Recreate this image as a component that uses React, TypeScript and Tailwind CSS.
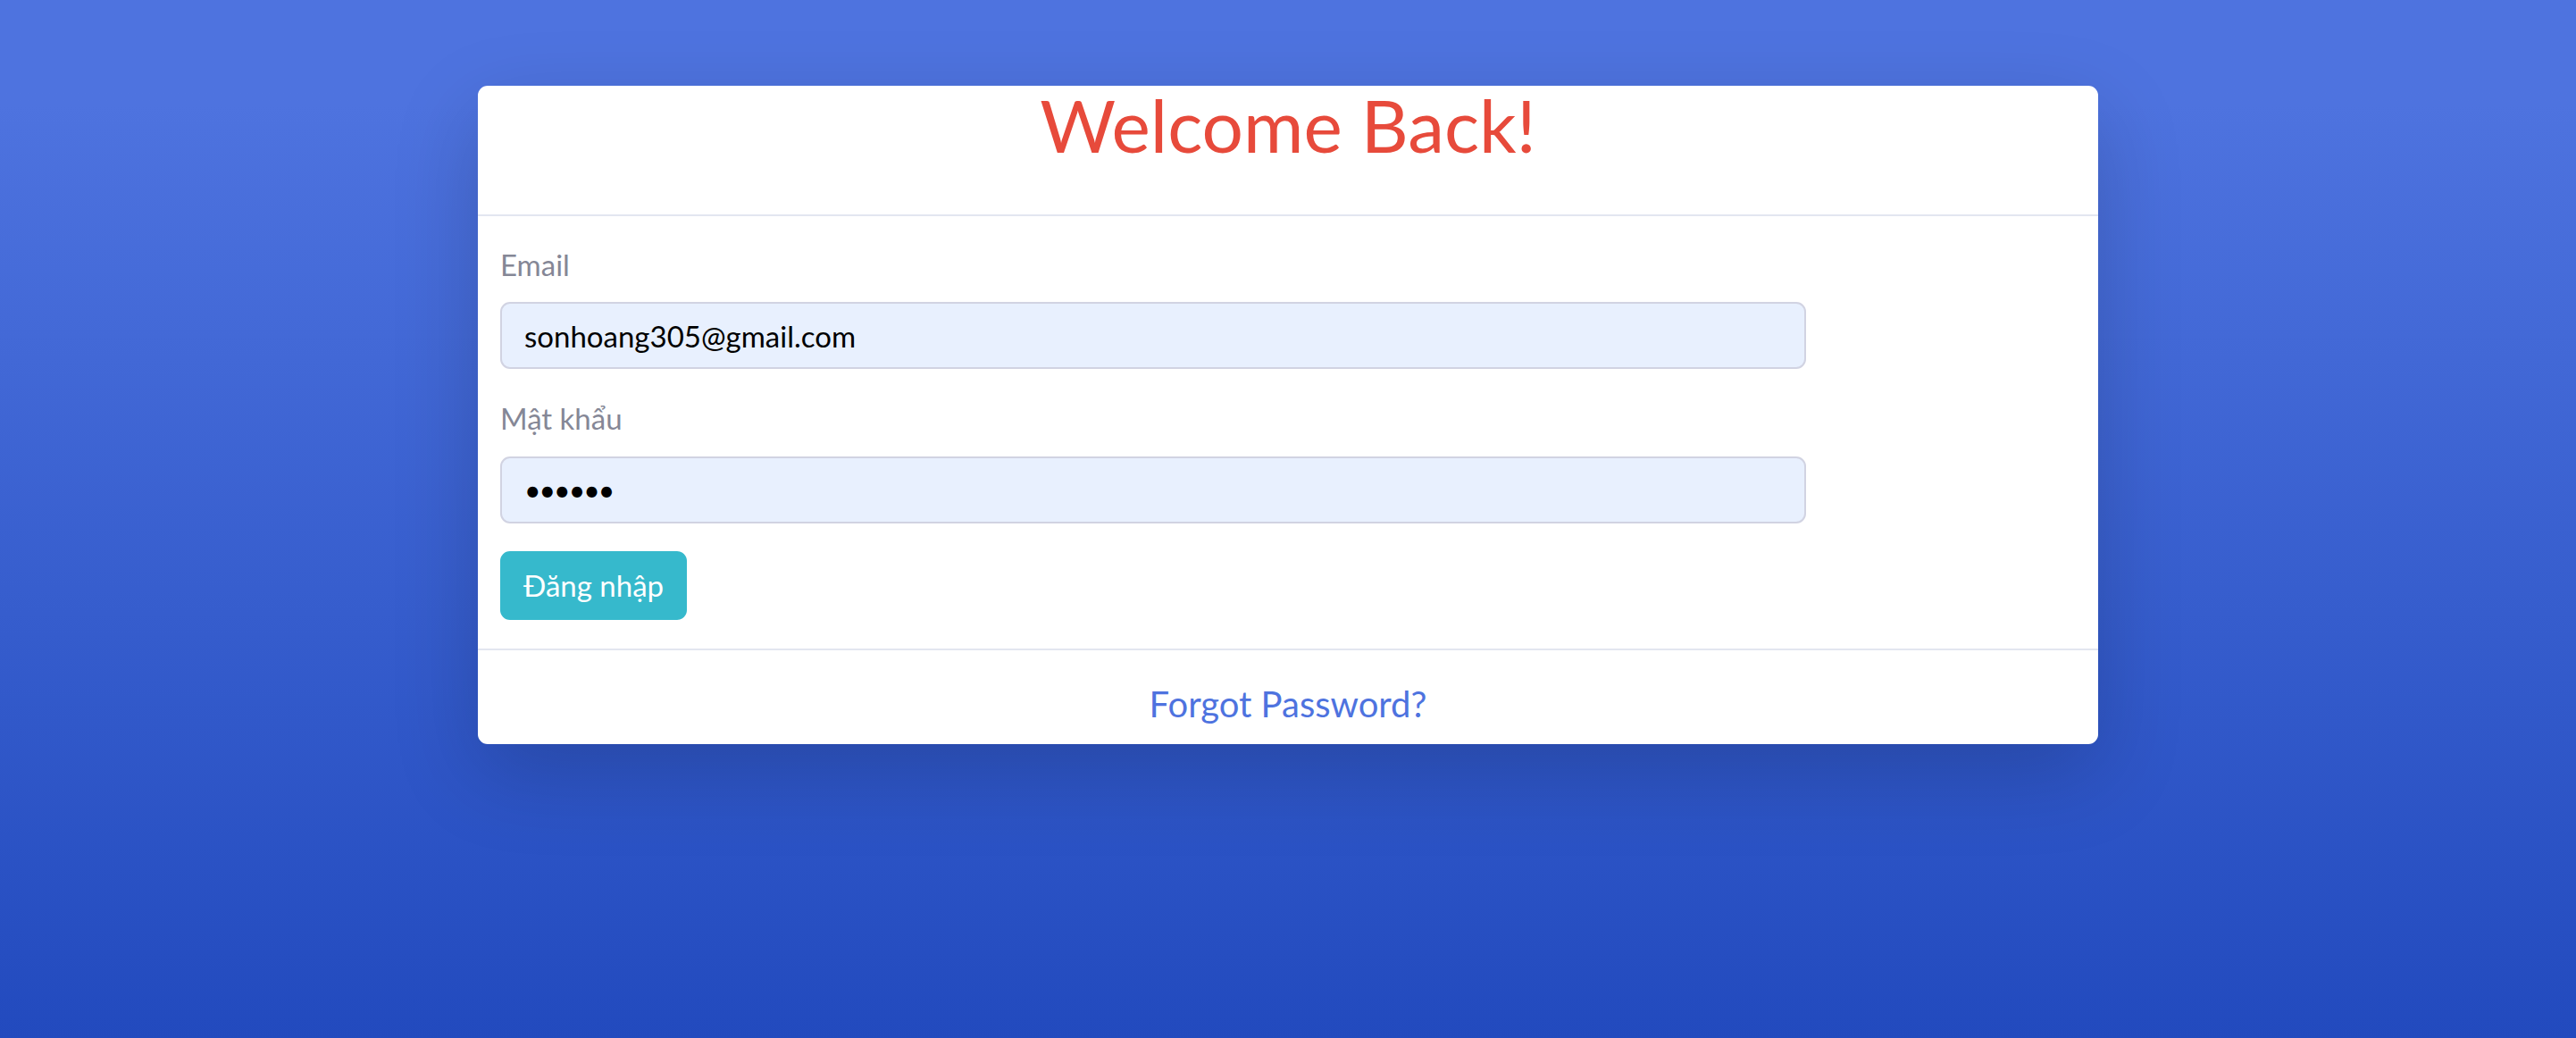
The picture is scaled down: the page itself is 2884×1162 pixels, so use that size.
export default function App() {
  return (
    <div
      className="min-h-screen w-full bg-gradient-to-b from-[#4e73df] from-10% to-[#224abe] flex justify-center pt-[96px]"
      style={{ fontFamily: "Lato, 'Open Sans', sans-serif" }}
    >
      <div className="w-[1814px] self-start bg-white rounded-[11px] shadow-[0_32px_96px_rgba(0,0,0,0.175)]">
        {/* header */}
        <div className="h-[146px] border-b-2 border-[#e3e6f0] text-center rounded-t-[11px]">
          <h1 className="pt-[4px] text-[82px] leading-[78px] text-[#e74a3b] font-normal">
            Welcome Back!
          </h1>
        </div>

        {/* body */}
        <form className="pl-[25px] pt-[30px] pb-[32px] flex flex-col items-start">
          <label className="text-[33px] leading-[48px] text-[#858796] mb-[18px]">
            Email
          </label>
          <input
            type="email"
            defaultValue="sonhoang305@gmail.com"
            readOnly
            className="w-[1462px] h-[75px] px-[25px] rounded-[11px] border-2 border-[#d1d3e2] bg-[#e8f0fe] text-[33px] text-black outline-none"
          />

          <label className="text-[33px] leading-[48px] text-[#858796] mt-[31px] mb-[19px]">
            Mật khẩu
          </label>
          <input
            type="password"
            defaultValue="123456"
            readOnly
            className="w-[1462px] h-[75px] px-[25px] rounded-[11px] border-2 border-[#d1d3e2] bg-[#e8f0fe] text-[32px] tracking-[-2px] text-black outline-none"
          />

          <button
            type="button"
            className="mt-[31px] w-[209px] h-[77px] rounded-[11px] bg-[#36b9cc] border-2 border-[#36b9cc] text-white text-[33px] flex items-center justify-center"
          >
            Đăng nhập
          </button>
        </form>

        {/* footer */}
        <div className="border-t-2 border-[#e3e6f0] text-center pt-[36px] pb-[21px]">
          <a href="#" className="text-[40px] leading-[48px] text-[#4e73df]">
            Forgot Password?
          </a>
        </div>
      </div>
    </div>
  );
}
